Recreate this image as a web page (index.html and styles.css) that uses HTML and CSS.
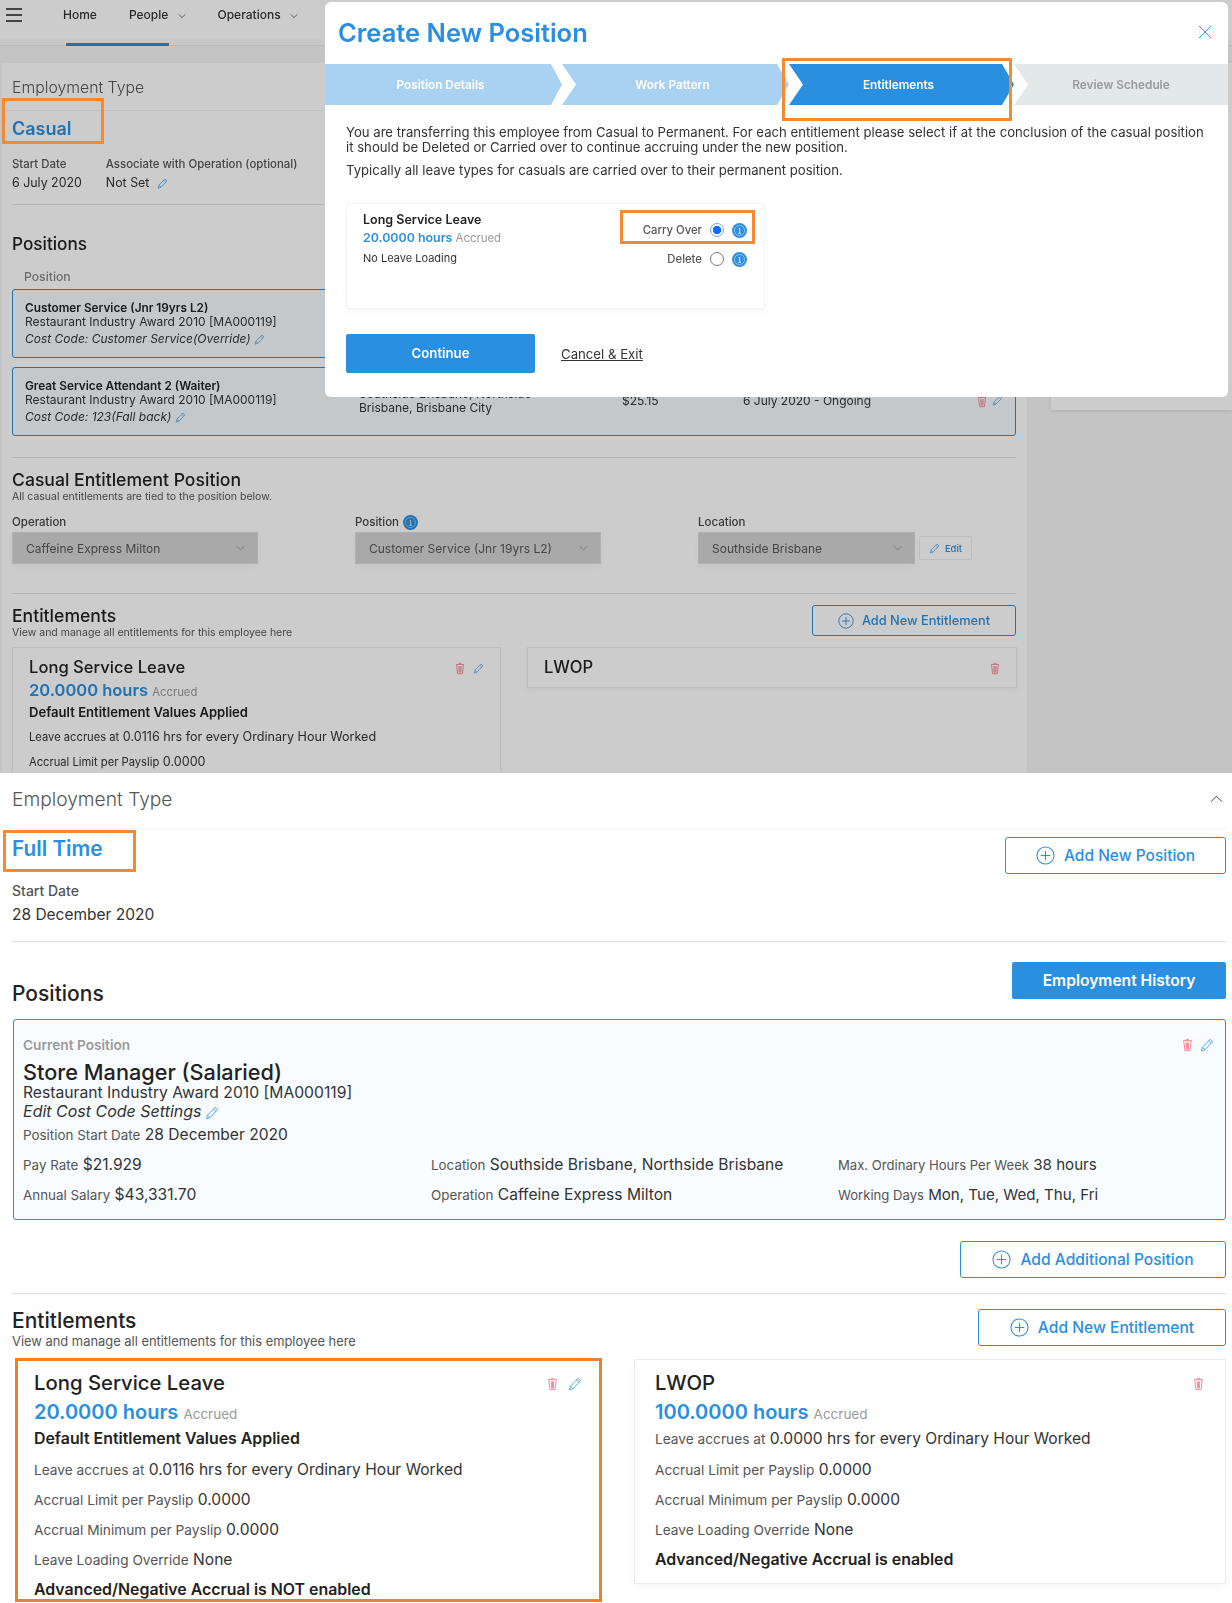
FILE: index.html
```html
<!DOCTYPE html>
<html lang="en">
<head>
    <meta charset="UTF-8">
    <title>Create New Position</title>
    <link rel="stylesheet" href="styles.css">
</head>
<body>

<svg class="defs" width="0" height="0">
    <symbol id="i-trash" viewBox="0 0 12 16">
        <path d="M1 3h10M4.5 3l.4-1.5h2.2l.4 1.5M1.8 3.4l1.2 11h6l1.2-11M4.6 5l.3 8M6 5v8M7.4 5l-.3 8" fill="none" stroke="currentColor" stroke-width="1.05"/>
    </symbol>
    <symbol id="i-pencil" viewBox="0 0 16 16">
        <path d="M11.5 1.5l3 2.6-8.7 9.2-4 1.4.9-4.1zM9.8 3.4l2.9 2.7M2.8 10.7l2.9 2.5" fill="none" stroke="currentColor" stroke-width="1.1"/>
    </symbol>
    <symbol id="i-plus" viewBox="0 0 20 20">
        <circle cx="10" cy="10" r="9" fill="none" stroke="currentColor" stroke-width="1.1"/>
        <path d="M10 5v10M5 10h10" fill="none" stroke="currentColor" stroke-width="1.1"/>
    </symbol>
    <symbol id="i-info" viewBox="0 0 16 16">
        <circle cx="8" cy="8" r="8" fill="#2f8fdd"/>
        <circle cx="8" cy="8" r="5.4" fill="none" stroke="#a5d2f5" stroke-width=".8"/>
        <path d="M7 6.2L8.2 5.6V11M6.8 11h2.8" fill="none" stroke="#d6ebfb" stroke-width="1"/>
    </symbol>
    <symbol id="i-down" viewBox="0 0 12 8">
        <path d="M1 1.5l5 5 5-5" fill="none" stroke="currentColor" stroke-width="1"/>
    </symbol>
</svg>

<!-- first shot: casual position with the modal open -->
<section class="shot">
    <nav class="topnav">
        <div class="burger"><span></span><span></span><span></span></div>
        <a class="nav-link nav-home">Home</a>
        <a class="nav-link nav-people">People <svg class="nav-caret"><use href="#i-down"/></svg></a>
        <a class="nav-link nav-ops">Operations <svg class="nav-caret"><use href="#i-down"/></svg></a>
    </nav>
    <div class="tabline"><span class="tab-active"></span></div>

    <div class="shot-cols">
        <div class="panel">
            <div class="type-head">Employment Type</div>
            <div class="type-name">Casual</div>
            <div class="meta-row">
                <div>
                    <div class="meta-label">Start Date</div>
                    <div class="meta-value">6 July 2020</div>
                </div>
                <div>
                    <div class="meta-label">Associate with Operation (optional)</div>
                    <div class="meta-value">Not Set <svg class="ico-pencil"><use href="#i-pencil"/></svg></div>
                </div>
            </div>
            <hr class="rule rule-meta">

            <h2 class="panel-title">Positions</h2>
            <div class="col-label">Position</div>
            <div class="pos-card">
                <div class="pos-name">
                    <b>Customer Service (Jnr 19yrs L2)</b>
                    <span>Restaurant Industry Award 2010 [MA000119]</span>
                    <i>Cost Code: Customer Service(Override) <svg class="ico-pencil"><use href="#i-pencil"/></svg></i>
                </div>
            </div>
            <div class="pos-card pos-card-two">
                <div class="pos-name">
                    <b>Great Service Attendant 2 (Waiter)</b>
                    <span>Restaurant Industry Award 2010 [MA000119]</span>
                    <i>Cost Code: 123(Fall back) <svg class="ico-pencil"><use href="#i-pencil"/></svg></i>
                </div>
                <div class="pos-loc">Southside Brisbane, Northside Brisbane, Brisbane City</div>
                <div class="pos-cell">$25.15</div>
                <div class="pos-cell">6 July 2020 - Ongoing</div>
                <div class="pos-actions">
                    <svg class="ico-trash"><use href="#i-trash"/></svg>
                    <svg class="ico-pencil"><use href="#i-pencil"/></svg>
                </div>
            </div>
            <hr class="rule rule-pos">

            <h3 class="sub-title">Casual Entitlement Position</h3>
            <div class="sub-note">All casual entitlements are tied to the position below.</div>
            <div class="form-row">
                <div class="field">
                    <label>Operation</label>
                    <div class="select">Caffeine Express Milton <svg class="sel-caret"><use href="#i-down"/></svg></div>
                </div>
                <div class="field">
                    <label>Position <svg class="ico-info-sm"><use href="#i-info"/></svg></label>
                    <div class="select">Customer Service (Jnr 19yrs L2) <svg class="sel-caret"><use href="#i-down"/></svg></div>
                </div>
                <div class="field">
                    <label>Location</label>
                    <div class="select-line">
                        <div class="select select-short">Southside Brisbane <svg class="sel-caret"><use href="#i-down"/></svg></div>
                        <div class="edit-btn"><svg class="ico-pencil"><use href="#i-pencil"/></svg> Edit</div>
                    </div>
                </div>
            </div>
            <hr class="rule rule-form">

            <div class="ent-head">
                <div>
                    <h3 class="sub-title">Entitlements</h3>
                    <div class="sub-note">View and manage all entitlements for this employee here</div>
                </div>
                <div class="btn-line btn-line-sm"><svg class="ico-plus"><use href="#i-plus"/></svg> Add New Entitlement</div>
            </div>
            <div class="mini-cards">
                <div class="mini-card">
                    <div class="mini-top">
                        <div class="mini-name">Long Service Leave</div>
                        <div class="mini-actions">
                            <svg class="ico-trash"><use href="#i-trash"/></svg>
                            <svg class="ico-pencil"><use href="#i-pencil"/></svg>
                        </div>
                    </div>
                    <div class="mini-hours">20.0000 hours <small>Accrued</small></div>
                    <div class="mini-bold">Default Entitlement Values Applied</div>
                    <div class="mini-row"><span>Leave accrues at</span> 0.0116 hrs for every Ordinary Hour Worked</div>
                    <div class="mini-row"><span>Accrual Limit per Payslip</span> 0.0000</div>
                </div>
                <div class="mini-card mini-card-short">
                    <div class="mini-top">
                        <div class="mini-name">LWOP</div>
                        <div class="mini-actions">
                            <svg class="ico-trash"><use href="#i-trash"/></svg>
                        </div>
                    </div>
                </div>
            </div>
        </div>
        <aside class="side">
            <div class="side-card"></div>
        </aside>
    </div>

    <div class="backdrop"></div>
    <span class="mark mark-casual"></span>

    <div class="modal">
        <div class="modal-head">
            <h1>Create New Position</h1>
            <svg class="modal-close" viewBox="0 0 14 14"><path d="M1 1l12 12M13 1L1 13" fill="none" stroke="#2b8fdf" stroke-width=".9"/></svg>
        </div>
        <div class="steps">
            <div class="step step-first step-done">Position Details</div>
            <div class="step step-second step-done">Work Pattern</div>
            <div class="step step-third step-now">Entitlements</div>
            <div class="step step-last">Review Schedule</div>
        </div>
        <div class="modal-body">
            <p class="lead">You are transferring this employee from Casual to Permanent. For each entitlement please select if at the conclusion of the casual position it should be Deleted or Carried over to continue accruing under the new position.</p>
            <p class="lead lead-two">Typically all leave types for casuals are carried over to their permanent position.</p>
            <div class="carry-card">
                <div>
                    <div class="carry-name">Long Service Leave</div>
                    <div class="carry-hours">20.0000 hours <small>Accrued</small></div>
                    <div class="carry-note">No Leave Loading</div>
                </div>
                <div class="carry-opts">
                    <div class="carry-opt">Carry Over <span class="radio radio-on"></span> <svg class="ico-info"><use href="#i-info"/></svg></div>
                    <div class="carry-opt">Delete <span class="radio"></span> <svg class="ico-info"><use href="#i-info"/></svg></div>
                </div>
            </div>
            <div class="modal-foot">
                <a class="btn-solid btn-continue">Continue</a>
                <a class="cancel-link">Cancel &amp; Exit</a>
            </div>
        </div>
        <span class="mark mark-step"></span>
        <span class="mark mark-carry"></span>
    </div>
</section>

<!-- second shot: after the transfer -->
<section class="page">
    <div class="page-head">
        <span>Employment Type</span>
        <svg class="head-caret" viewBox="0 0 14 8"><path d="M1 7l6-6 6 6" fill="none" stroke="#333" stroke-width="1"/></svg>
    </div>
    <div class="type-row">
        <div class="page-type">Full Time</div>
        <div class="btn-line btn-add-pos"><svg class="ico-plus-lg"><use href="#i-plus"/></svg> Add New Position</div>
    </div>
    <span class="mark mark-full"></span>
    <div class="page-label">Start Date</div>
    <div class="page-date">28 December 2020</div>
    <hr class="rule rule-date">

    <div class="pos-head">
        <h2 class="page-title">Positions</h2>
        <a class="btn-solid btn-history">Employment History</a>
    </div>

    <div class="current-card">
        <div class="current-top">
            <div class="current-label">Current Position</div>
            <div class="current-actions">
                <svg class="ico-trash-lg"><use href="#i-trash"/></svg>
                <svg class="ico-pencil-lg"><use href="#i-pencil"/></svg>
            </div>
        </div>
        <div class="current-name">Store Manager (Salaried)</div>
        <div class="current-award">Restaurant Industry Award 2010 [MA000119]</div>
        <div class="current-cost">Edit Cost Code Settings<svg class="ico-pencil-lg"><use href="#i-pencil"/></svg></div>
        <div class="kv current-start"><span>Position Start Date</span> 28 December 2020</div>
        <div class="current-grid">
            <div class="kv"><span>Pay Rate</span> $21.929</div>
            <div class="kv"><span>Location</span> Southside Brisbane, Northside Brisbane</div>
            <div class="kv"><span>Max. Ordinary Hours Per Week</span> 38 hours</div>
            <div class="kv"><span>Annual Salary</span> $43,331.70</div>
            <div class="kv"><span>Operation</span> Caffeine Express Milton</div>
            <div class="kv"><span>Working Days</span> Mon, Tue, Wed, Thu, Fri</div>
        </div>
    </div>

    <div class="add-row">
        <div class="btn-line btn-add-extra"><svg class="ico-plus-lg"><use href="#i-plus"/></svg> Add Additional Position</div>
    </div>
    <hr class="rule rule-add">

    <div class="page-ent-head">
        <div>
            <h2 class="page-title page-title-ent">Entitlements</h2>
            <div class="page-note">View and manage all entitlements for this employee here</div>
        </div>
        <div class="btn-line btn-add-ent"><svg class="ico-plus-lg"><use href="#i-plus"/></svg> Add New Entitlement</div>
    </div>

    <div class="ent-cards">
        <div class="ent-card ent-marked">
            <div class="ent-top">
                <div class="ent-name">Long Service Leave</div>
                <div class="ent-actions">
                    <svg class="ico-trash-lg"><use href="#i-trash"/></svg>
                    <svg class="ico-pencil-lg"><use href="#i-pencil"/></svg>
                </div>
            </div>
            <div class="ent-hours">20.0000 hours <small>Accrued</small></div>
            <div class="ent-bold">Default Entitlement Values Applied</div>
            <div class="kv ent-row"><span>Leave accrues at</span> 0.0116 hrs for every Ordinary Hour Worked</div>
            <div class="kv ent-row"><span>Accrual Limit per Payslip</span> 0.0000</div>
            <div class="kv ent-row"><span>Accrual Minimum per Payslip</span> 0.0000</div>
            <div class="kv ent-row"><span>Leave Loading Override</span> None</div>
            <div class="ent-bold ent-last">Advanced/Negative Accrual is NOT enabled</div>
        </div>
        <div class="ent-card ent-plain">
            <div class="ent-top">
                <div class="ent-name">LWOP</div>
                <div class="ent-actions">
                    <svg class="ico-trash-lg"><use href="#i-trash"/></svg>
                </div>
            </div>
            <div class="ent-hours">100.0000 hours <small>Accrued</small></div>
            <div class="kv ent-first"><span>Leave accrues at</span> 0.0000 hrs for every Ordinary Hour Worked</div>
            <div class="kv ent-row"><span>Accrual Limit per Payslip</span> 0.0000</div>
            <div class="kv ent-row"><span>Accrual Minimum per Payslip</span> 0.0000</div>
            <div class="kv ent-row"><span>Leave Loading Override</span> None</div>
            <div class="ent-bold ent-last">Advanced/Negative Accrual is enabled</div>
        </div>
    </div>
</section>

</body>
</html>
```

FILE: styles.css
```css
* {
    margin: 0;
    padding: 0;
    box-sizing: border-box;
}

body {
    font-family: Inter, "Noto Sans", sans-serif;
    background-color: #fff;
    color: #222;
    width: 1232px;
    overflow-x: hidden;
}

.defs {
    position: absolute;
}

svg {
    display: inline-block;
    vertical-align: middle;
}

hr.rule {
    border: none;
    border-top: 1px solid #e2e2e2;
}

/* ---------- first shot ---------- */

.shot {
    position: relative;
    height: 773px;
    overflow: hidden;
    background-color: #f6f6f6;
    filter: blur(.35px);
}

.backdrop {
    position: absolute;
    inset: 0;
    background-color: rgba(0, 0, 0, 0.2);
}

.mark {
    position: absolute;
    border: 3px solid #f58a33;
}

.mark-casual {
    left: 2px;
    top: 98px;
    width: 102px;
    height: 46px;
}

.mark-step {
    left: 457px;
    top: 56px;
    width: 230px;
    height: 63px;
}

.mark-carry {
    left: 295px;
    top: 208px;
    width: 135px;
    height: 34px;
}

.mark-full {
    left: 3px;
    top: 57px;
    width: 133px;
    height: 42px;
}

.topnav {
    display: flex;
    align-items: center;
    height: 39px;
    background-color: #fff;
    font-size: 12px;
    font-weight: 500;
    color: #333;
}

.burger {
    display: flex;
    flex-direction: column;
    gap: 4px;
    margin-left: 6px;
    width: 16px;
    margin-top: -9px;
}

.burger span {
    height: 2px;
    background-color: #555;
}

.nav-link {
    position: relative;
    top: -5px;
}

.nav-home {
    margin-left: 41px;
}

.nav-people {
    margin-left: 32px;
}

.nav-ops {
    margin-left: 32px;
}

.nav-caret {
    width: 8px;
    height: 6px;
    margin-left: 6px;
}

.tabline {
    height: 7px;
    padding-top: 4px;
    border-bottom: 1px solid #e8e8e8;
    background-color: #fafafa;
}

.tab-active {
    display: block;
    width: 103px;
    height: 3px;
    margin-left: 66px;
    background-color: #2b8fdf;
}

.shot-cols {
    display: grid;
    grid-template-columns: 1028px 1fr;
    margin-top: 17px;
}

.panel {
    margin-left: 2px;
    padding: 0 11px 0 10px;
    background-color: #fff;
    border-right: 1px solid #f0f0f0;
    height: 730px;
}

.side {
    padding-left: 23px;
}

.side-card {
    height: 347px;
    background-color: #fff;
    box-shadow: 0 1px 4px rgba(0, 0, 0, 0.12);
}

.type-head {
    display: flex;
    align-items: center;
    height: 48px;
    padding-top: 2px;
    margin: 0 -11px 0 -10px;
    padding-left: 10px;
    font-size: 15.8px;
    font-weight: 300;
    color: #555;
    border-bottom: 1px solid #f2f2f2;
}

.type-name {
    margin-top: 6px;
    font-size: 18px;
    line-height: 24px;
    font-weight: 600;
    color: #2b8fdf;
}

.meta-row {
    display: flex;
    gap: 24px;
    margin-top: 15px;
}

.meta-label {
    font-size: 11.4px;
    line-height: 16px;
    font-weight: 500;
    color: #555;
}

.meta-value {
    margin-top: 2px;
    font-size: 12.4px;
    line-height: 18px;
    color: #333;
}

.ico-pencil {
    width: 11px;
    height: 11px;
    margin-left: 4px;
    color: #4ea2e8;
}

.ico-trash {
    width: 10px;
    height: 13px;
    color: #f47f8f;
}

.ico-info-sm {
    width: 15px;
    height: 15px;
    margin-left: 1px;
}

.rule-meta {
    margin-top: 12px;
}

.panel-title {
    margin-top: 27px;
    font-size: 17.2px;
    line-height: 24px;
    font-weight: 500;
}

.col-label {
    margin: 13px 0 0 12px;
    font-size: 12.2px;
    line-height: 16px;
    font-weight: 500;
    color: #888;
}

.pos-card {
    display: grid;
    grid-template-columns: 334px 263px 121px 1fr auto;
    height: 69px;
    margin-top: 4px;
    padding: 0 12px;
    background-color: #f6fbfe;
    border: 1px solid #2b8fdf;
    border-radius: 3px;
}

.pos-card-two {
    margin-top: 9px;
}

.pos-name {
    padding-top: 12px;
    font-size: 12px;
    line-height: 13px;
    color: #333;
}

.pos-name b,
.pos-name span,
.pos-name i {
    display: block;
}

.pos-name b {
    font-size: 11.8px;
    font-weight: 600;
    color: #222;
}

.pos-name i {
    margin-top: 4px;
    line-height: 14px;
}

.pos-name svg {
    margin-left: 0;
}

.pos-loc {
    padding: 19px 60px 0 0;
    font-size: 12px;
    line-height: 14px;
    color: #333;
}

.pos-cell {
    padding-top: 26px;
    font-size: 12px;
    line-height: 14px;
    color: #333;
}

.pos-actions {
    display: flex;
    gap: 5px;
    padding-top: 27px;
}

.pos-actions svg {
    margin-left: 0;
}

.rule-pos {
    margin-top: 21px;
}

.sub-title {
    margin-top: 11px;
    font-size: 17.6px;
    line-height: 22px;
    font-weight: 500;
}

.sub-note {
    font-size: 10.5px;
    line-height: 12px;
    color: #555;
}

.form-row {
    display: grid;
    grid-template-columns: 343px 343px 1fr;
    margin-top: 12px;
}

.field label {
    display: block;
    height: 14px;
    font-size: 11.5px;
    line-height: 14px;
    font-weight: 500;
    color: #444;
}

.select {
    display: flex;
    align-items: center;
    justify-content: space-between;
    width: 244px;
    height: 30px;
    margin: 4px 0 0 1px;
    padding: 0 12px 0 13px;
    background-color: #d4d4d4;
    box-shadow: 0 0 0 1px #dcdcdc, 0 3px 8px rgba(0, 0, 0, 0.04);
    font-size: 12px;
    color: #555;
}

.select-short {
    width: 215px;
}

.sel-caret {
    width: 9px;
    height: 6px;
    color: #888;
}

.select-line {
    display: flex;
    align-items: flex-start;
}

.edit-btn {
    display: flex;
    align-items: center;
    justify-content: center;
    width: 53px;
    height: 24px;
    margin: 7px 0 0 5px;
    font-size: 9.5px;
    font-weight: 500;
    color: #2b8fdf;
    background-color: #fff;
    border: 1px solid #eee;
    border-radius: 2px;
}

.edit-btn svg {
    margin: 0 5px 0 0;
}

.rule-form {
    margin-top: 30px;
}

.ent-head {
    display: flex;
    justify-content: space-between;
    align-items: flex-start;
}

.btn-line {
    display: flex;
    align-items: center;
    justify-content: center;
    color: #2b8fdf;
    background-color: #fff;
    border: 1px solid #2b8fdf;
    border-radius: 3px;
    font-weight: 500;
}

.btn-line-sm {
    width: 204px;
    height: 31px;
    margin-top: 11px;
    font-size: 12.8px;
}

.ico-plus {
    width: 16px;
    height: 16px;
    margin-right: 8px;
}

.ico-plus-lg {
    width: 19px;
    height: 19px;
    margin-right: 9px;
}

.mini-cards {
    display: grid;
    grid-template-columns: 489px 490px;
    gap: 26px;
    align-items: start;
    margin-top: 8px;
}

.mini-card {
    height: 130px;
    padding: 8px 16px 0;
    background-color: #fff;
    border: 1px solid #eceeef;
    box-shadow: 0 2px 5px rgba(0, 0, 0, 0.04);
}

.mini-card-short {
    height: 41px;
}

.mini-top {
    display: flex;
    justify-content: space-between;
    align-items: flex-start;
}

.mini-name {
    font-size: 16.6px;
    line-height: 22px;
    font-weight: 500;
}

.mini-actions {
    display: flex;
    gap: 8px;
    align-items: center;
    padding-top: 6px;
}

.mini-actions svg {
    margin: 0;
}

.mini-hours {
    font-size: 16.5px;
    line-height: 24px;
    font-weight: 600;
    color: #2b8fdf;
}

.mini-hours small {
    font-size: 11.3px;
    font-weight: 400;
    color: #999;
}

.mini-bold {
    font-size: 13.1px;
    line-height: 16px;
    font-weight: 600;
}

.mini-row {
    margin-top: 8px;
    font-size: 12.6px;
    line-height: 18px;
    color: #333;
}

.mini-row + .mini-row {
    margin-top: 7px;
}

.mini-row span {
    font-size: 11.2px;
}

/* ---------- modal ---------- */

.modal {
    position: absolute;
    left: 325px;
    top: 2px;
    width: 903px;
    height: 395px;
    background-color: #fff;
    border-radius: 6px;
}

.modal-head {
    display: flex;
    align-items: center;
    justify-content: space-between;
    height: 62px;
    padding: 0 16px 2px 13px;
}

.modal-head h1 {
    font-size: 25.5px;
    font-weight: 600;
    color: #2b8fdf;
}

.modal-close {
    width: 14px;
    height: 14px;
}

.steps {
    display: flex;
    height: 41px;
    font-size: 11.8px;
    font-weight: 600;
}

.step {
    display: flex;
    align-items: center;
    justify-content: center;
    padding-right: 6px;
    color: #999;
    background-color: #e3e9ea;
}

.step-done {
    color: #fff;
    background-color: #a9d1f2;
}

.step-now {
    color: #fff;
    background-color: #2b8fdf;
}

.step-first {
    width: 237px;
    clip-path: polygon(0 0, calc(100% - 11px) 0, 100% 50%, calc(100% - 11px) 100%, 0 100%);
}

.step-second {
    width: 227px;
    clip-path: polygon(0 0, calc(100% - 12px) 0, 100% 50%, calc(100% - 12px) 100%, 0 100%, 14px 50%);
}

.step-third {
    width: 225px;
    clip-path: polygon(0 0, calc(100% - 12px) 0, 100% 50%, calc(100% - 12px) 100%, 0 100%, 14px 50%);
}

.step-last {
    width: 214px;
    padding-right: 0;
    clip-path: polygon(0 0, 100% 0, 100% 100%, 0 100%, 14px 50%);
}

.modal-body {
    padding: 0 21px;
}

.lead {
    margin-top: 20px;
    font-size: 13.15px;
    line-height: 15px;
    color: #333;
}

.lead-two {
    margin-top: 8px;
}

.carry-card {
    display: flex;
    justify-content: space-between;
    width: 419px;
    height: 106px;
    margin-top: 25px;
    padding: 9px 17px 0 16px;
    border: 1px solid #f2f4f5;
    border-radius: 2px;
    box-shadow: 0 3px 8px rgba(0, 0, 0, 0.03);
}

.carry-name {
    font-size: 12.5px;
    line-height: 14px;
    font-weight: 600;
}

.carry-hours {
    margin-top: 3px;
    font-size: 12.4px;
    line-height: 16px;
    font-weight: 600;
    color: #2b8fdf;
}

.carry-hours small {
    font-size: 11.4px;
    font-weight: 400;
    color: #999;
}

.carry-note {
    margin-top: 5px;
    font-size: 11px;
    line-height: 14px;
    color: #333;
}

.carry-opts {
    display: flex;
    flex-direction: column;
    gap: 9px;
    padding-top: 7px;
}

.carry-opt {
    display: flex;
    align-items: center;
    justify-content: flex-end;
    gap: 8px;
    height: 20px;
    font-size: 11.3px;
    font-weight: 500;
    color: #555;
}

.radio {
    width: 14px;
    height: 14px;
    border: 1px solid #777;
    border-radius: 50%;
}

.radio-on {
    border-color: #6aa9f5;
    background: radial-gradient(circle, #0a6fff 0, #0a6fff 3.8px, #fff 4.5px);
}

.ico-info {
    width: 15px;
    height: 15px;
}

.modal-foot {
    display: flex;
    align-items: center;
    gap: 26px;
    margin-top: 25px;
}

.btn-solid {
    display: flex;
    align-items: center;
    justify-content: center;
    color: #fff;
    background-color: #2b8fdf;
    border-radius: 2px;
    font-weight: 600;
}

.btn-continue {
    width: 189px;
    height: 39px;
    padding-bottom: 1px;
    font-size: 13.2px;
}

.cancel-link {
    font-size: 13.2px;
    color: #333;
    text-decoration: underline;
}

/* ---------- second shot ---------- */

.page {
    position: relative;
    padding: 0 6px 0 12px;
}

.page-head {
    display: flex;
    align-items: center;
    justify-content: space-between;
    height: 56px;
    padding: 0 3px 4px 0;
    font-size: 19.2px;
    font-weight: 300;
    color: #555;
    border-bottom: 1px solid #f4f4f4;
}

.head-caret {
    width: 13px;
    height: 8px;
}

.type-row {
    display: flex;
    justify-content: space-between;
    align-items: flex-start;
    height: 45px;
}

.page-type {
    margin-top: 5px;
    font-size: 20.8px;
    line-height: 30px;
    font-weight: 600;
    color: #2b8fdf;
}

.btn-add-pos {
    width: 221px;
    height: 37px;
    margin-top: 8px;
    font-size: 15.5px;
}

.page-label {
    margin-top: 8px;
    font-size: 14px;
    line-height: 18px;
    font-weight: 500;
    color: #555;
}

.page-date {
    margin-top: 4px;
    font-size: 15.5px;
    line-height: 22px;
    color: #333;
}

.rule-date {
    margin-top: 15px;
}

.pos-head {
    display: flex;
    justify-content: space-between;
    align-items: flex-start;
}

.page-title {
    margin-top: 39px;
    font-size: 21px;
    line-height: 26px;
    font-weight: 500;
}

.btn-history {
    width: 214px;
    height: 37px;
    margin-top: 20px;
    font-size: 15.6px;
}

.current-card {
    height: 201px;
    margin: 12px 0 0 1px;
    padding: 16px 10px 0 9px;
    background-color: #f8fcff;
    border: 1px solid #2b8fdf;
    border-radius: 3px;
}

.current-top {
    display: flex;
    justify-content: space-between;
    align-items: center;
    height: 18px;
}

.current-label {
    font-size: 13.7px;
    font-weight: 600;
    color: #999;
}

.current-actions,
.ent-actions {
    display: flex;
    align-items: center;
    gap: 7px;
    padding-right: 1px;
}

.ent-actions {
    gap: 10px;
}

.ico-trash-lg {
    width: 11px;
    height: 14px;
    color: #f47f8f;
}

.ico-pencil-lg {
    width: 14px;
    height: 14px;
    color: #4ea2e8;
}

.current-name {
    margin-top: 5px;
    font-size: 21.7px;
    line-height: 26px;
    font-weight: 500;
}

.current-award {
    font-size: 15.7px;
    line-height: 16px;
    color: #333;
}

.current-cost {
    margin-top: 1px;
    font-size: 16px;
    line-height: 18px;
    font-style: italic;
    color: #333;
}

.current-cost svg {
    margin-left: 3px;
}

.kv {
    font-size: 15.6px;
    line-height: 20px;
    color: #333;
}

.kv span {
    font-size: 13.4px;
    color: #555;
}

.current-start {
    margin-top: 5px;
}

.current-grid {
    display: grid;
    grid-template-columns: 408px 407px 1fr;
    row-gap: 10px;
    margin-top: 10px;
}

.current-grid .kv:nth-child(3n) {
    font-size: 15.1px;
}

.current-grid .kv:nth-child(3n) span {
    font-size: 13.1px;
}

.add-row {
    display: flex;
    justify-content: flex-end;
    margin-top: 21px;
}

.btn-add-extra {
    width: 266px;
    height: 37px;
    font-size: 15.6px;
}

.rule-add {
    margin-top: 15px;
}

.page-ent-head {
    display: flex;
    justify-content: space-between;
    align-items: flex-start;
}

.page-title-ent {
    margin-top: 14px;
}

.page-note {
    font-size: 12.9px;
    line-height: 16px;
    color: #555;
}

.btn-add-ent {
    width: 248px;
    height: 37px;
    margin-top: 15px;
    font-size: 15.6px;
}

.ent-cards {
    display: grid;
    grid-template-columns: 587px 592px;
    gap: 32px;
    align-items: start;
    margin: 8px 0 0 3px;
}

.ent-card {
    background-color: #fff;
}

.ent-marked {
    height: 244px;
    padding: 8px 16px 0;
    border: 3px solid #ed7f2d;
}

.ent-plain {
    height: 225px;
    margin-top: 1px;
    padding: 9px 20px 0;
    border: 1px solid #e8ecee;
    border-radius: 2px;
    box-shadow: 0 3px 8px rgba(0, 0, 0, 0.04);
}

.ent-top {
    display: flex;
    justify-content: space-between;
    align-items: center;
    height: 26px;
}

.ent-actions {
    padding-top: 4px;
}

.ent-name {
    font-size: 20.3px;
    font-weight: 500;
}

.ent-hours {
    margin-top: 3px;
    font-size: 20px;
    line-height: 28px;
    font-weight: 600;
    color: #2b8fdf;
}

.ent-hours small {
    font-size: 13.5px;
    font-weight: 400;
    color: #999;
}

.ent-bold {
    margin-top: 1px;
    font-size: 15.9px;
    line-height: 20px;
    font-weight: 600;
}

.ent-first {
    margin-top: 1px;
}

.ent-row,
.ent-last {
    margin-top: 10px;
}

.ent-bold + .ent-row,
.ent-first + .ent-row {
    margin-top: 11px;
}

.ent-row span,
.ent-first span {
    font-size: 13.7px;
}
```
